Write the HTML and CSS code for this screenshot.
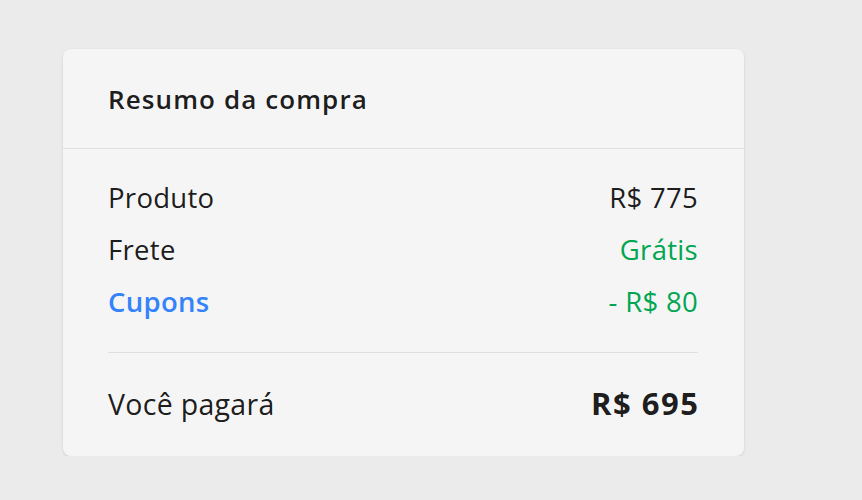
FILE: index.html
```html
<!DOCTYPE html>
<html lang="pt-BR">
<head>
<meta charset="utf-8">
<link rel="stylesheet" href="styles.css">
</head>
<body>
<main class="page">
  <section class="card">
    <header class="card-header">
      <h2 class="title">Resumo da compra</h2>
    </header>
    <div class="card-body">
      <div class="row"><span>Produto</span><span>R$ 775</span></div>
      <div class="row"><span>Frete</span><span class="green">Grátis</span></div>
      <div class="row"><span class="blue">Cupons</span><span class="green">- R$ 80</span></div>
      <div class="divider"></div>
      <div class="row total"><span class="total-label">Você pagará</span><span class="total-value">R$ 695</span></div>
    </div>
  </section>
</main>
</body>
</html>
```
FILE: styles.css
```css
html, body {
  margin: 0;
  padding: 0;
  background: #ebebeb;
  font-family: "Open Sans", "Noto Sans", sans-serif;
  color: rgba(0,0,0,0.9);
}
.page {
  padding: 49px 0 0 63px;
}
.card {
  width: 681px;
  background: #f5f5f5;
  border-radius: 8px;
  box-shadow: 0 1px 3px rgba(0,0,0,0.12);
}
.card-header {
  height: 99px;
  border-bottom: 1px solid #e0e0e0;
  padding: 0 45px;
  display: flex;
  align-items: center;
}
.title {
  margin: 0;
  font-size: 26px;
  line-height: 30px;
  font-weight: 600;
  letter-spacing: 1.1px;
}
.card-body {
  padding: 23px 46px 23px 45px;
}
.row {
  display: flex;
  justify-content: space-between;
  align-items: baseline;
  height: 52px;
  line-height: 52px;
  font-size: 27.5px;
  letter-spacing: 0.3px;
}
.green { color: #00a650; }
.blue { color: #3483fa; font-weight: 600; }
.divider {
  height: 1px;
  background: #e0e0e0;
  margin: 24px 0 20px;
}
.row.total {
  height: 60px;
  line-height: 60px;
}
.total-label { font-size: 28.5px; }
.total-value { font-size: 31px; font-weight: 700; letter-spacing: 1.5px; margin-right: -1.5px; }
```
